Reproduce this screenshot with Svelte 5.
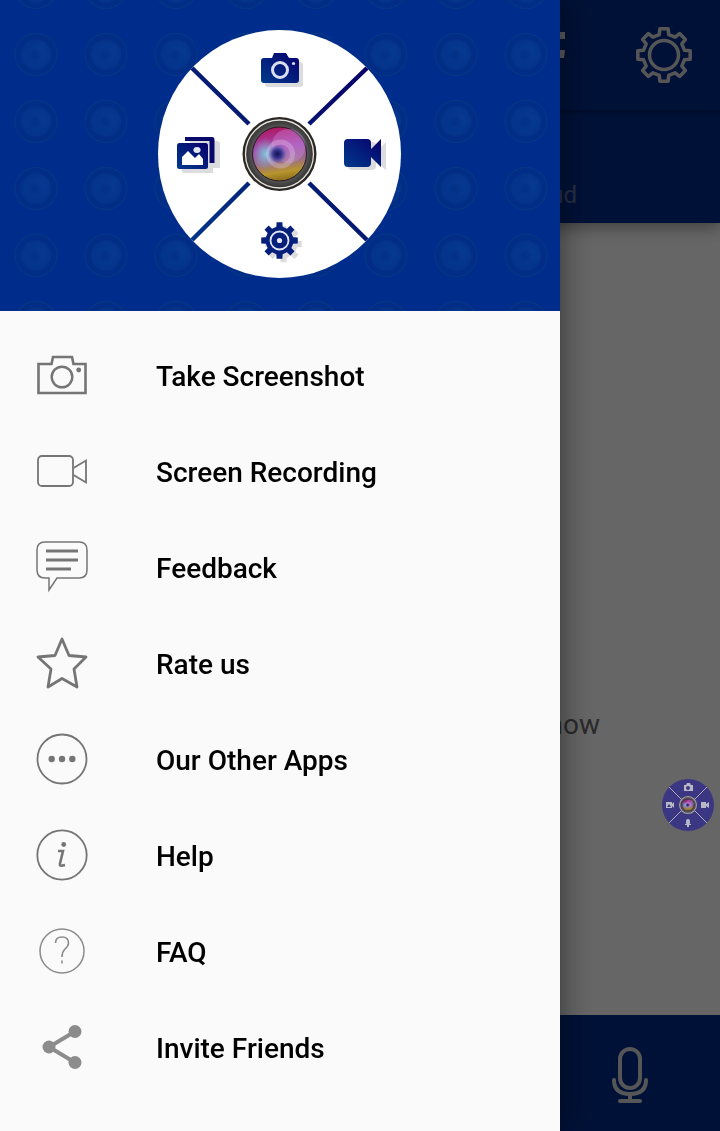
<script lang="ts">
	type Item = { id: string; label: string };

	const items: Item[] = [
		{ id: 'camera', label: 'Take Screenshot' },
		{ id: 'video', label: 'Screen Recording' },
		{ id: 'feedback', label: 'Feedback' },
		{ id: 'star', label: 'Rate us' },
		{ id: 'more', label: 'Our Other Apps' },
		{ id: 'info', label: 'Help' },
		{ id: 'question', label: 'FAQ' },
		{ id: 'share', label: 'Invite Friends' }
	];

	// Eight-tooth gear centred on 0,0. Half angles are in degrees.
	function gear(outer: number, inner: number, tip: number, root: number) {
		const points: string[] = [];
		for (let i = 0; i < 8; i++) {
			const base = i * 45;
			const corners = [
				[inner, -root],
				[outer, -tip],
				[outer, tip],
				[inner, root]
			];
			for (const [r, deg] of corners) {
				const a = ((base + deg) * Math.PI) / 180;
				points.push(`${(r * Math.cos(a)).toFixed(2)},${(r * Math.sin(a)).toFixed(2)}`);
			}
		}
		return points.join(' ');
	}
</script>

{#snippet lens()}
	<circle r="37" fill="#2a2724" />
	<circle r="34" fill="#3c3b39" stroke="#e4e4dc" stroke-width="1.3" />
	<circle r="30.5" fill="#505050" stroke="#444" stroke-width="2" />
	<circle r="27" fill="url(#glass)" stroke="#2b1a24" />
	<ellipse cx="-14" cy="0" rx="13" ry="16" fill="url(#cyan)" />
	<circle cx="9" cy="-8" r="17" fill="#d8a0f0" opacity="0.3" />
	<circle cx="1" r="12" fill="none" stroke="#ecd8f4" stroke-width="5" opacity="0.3" />
	<circle cx="-2" r="9" fill="url(#pupil)" />
{/snippet}

<div class="screen">
	<header class="appbar">
		<svg class="brand" width="18" height="30" viewBox="0 0 18 30" aria-hidden="true">
			<path d="M2 2H18V9H10V26H2ZM12 20H18L17 28H12Z" fill="#e6e6e6" />
		</svg>
		<button class="icon-button" aria-label="Settings">
			<svg width="60" height="60" viewBox="-30 -30 60 60" fill="none" stroke="#d8d8d8" stroke-width="3.5" stroke-linejoin="round">
				<polygon points={gear(26.5, 21, 9, 13)} />
				<circle r="14.5" />
			</svg>
		</button>
	</header>
	<div class="tabs">
		<button class="tab">Cloud</button>
	</div>
	<main class="content">
		<p>now</p>
	</main>
	<footer class="toolbar">
		<button class="icon-button mic" aria-label="Record audio">
			<svg width="40" height="60" viewBox="0 0 40 60" fill="none" stroke="#d8d8d8" stroke-width="4" stroke-linecap="round">
				<rect x="10" y="6" width="20" height="39" rx="10" />
				<path d="M4 37C4 47 10 51 20 51S36 47 36 37M20 51V58M10 58H30" />
			</svg>
		</button>
	</footer>
</div>

<div class="scrim"></div>

<button class="bubble" aria-label="Open quick actions">
	<svg width="52" height="52" viewBox="0 0 52 52">
		<circle cx="26" cy="26" r="26" fill="#3c3783" />
		<path d="M7 8L19 20M45 8L33 20M7 44L19 32M45 44L33 32" stroke="#aaa9c0" />
		<g fill="#b9b8c6">
			<path d="M22 6H24L25 4H28L29 6H31V12H22Z" />
			<path d="M4 23H10V25L12 23V29L10 27V29H4Z" />
			<path d="M39 23H44V25L47 23V29L44 27V29H39Z" />
			<rect x="24" y="40" width="4" height="6" rx="2" />
			<path d="M23 45H29V46H27V48H25V46H23Z" />
		</g>
		<circle cx="26" cy="9" r="2" fill="#3c3783" />
		<path d="M5 28L7 25L9 28Z" fill="#3c3783" />
		<g transform="translate(26 26) scale(0.21)" opacity="0.85">
			<circle r="43" fill="#b9b0a8" />
			{@render lens()}
		</g>
	</svg>
</button>

<aside class="drawer">
	<div class="banner">
		<svg class="wheel" width="244" height="248" viewBox="158 30 244 248" aria-hidden="true">
			<defs>
				<linearGradient id="navy" gradientUnits="userSpaceOnUse" x1="367" y1="68" x2="192" y2="240">
					<stop offset="0" stop-color="#08006a" />
					<stop offset="0.5" stop-color="#041b74" />
					<stop offset="1" stop-color="#00348a" />
				</linearGradient>
				<linearGradient id="shape" x1="1" y1="0" x2="0" y2="1">
					<stop offset="0" stop-color="#08006c" />
					<stop offset="1" stop-color="#003a8c" />
				</linearGradient>
				<linearGradient id="glass" x1="0.3" y1="0" x2="0.45" y2="1">
					<stop offset="0" stop-color="#b0145f" />
					<stop offset="0.4" stop-color="#a24bb0" />
					<stop offset="0.65" stop-color="#9a6a8a" />
					<stop offset="0.85" stop-color="#b8962c" />
					<stop offset="1" stop-color="#8d6f1d" />
				</linearGradient>
				<radialGradient id="cyan">
					<stop offset="0" stop-color="#7cc4da" />
					<stop offset="1" stop-color="#8ab4d0" stop-opacity="0" />
				</radialGradient>
				<radialGradient id="pupil">
					<stop offset="0" stop-color="#150f52" />
					<stop offset="0.5" stop-color="#3c3690" />
					<stop offset="1" stop-color="#5c62b0" stop-opacity="0.2" />
				</radialGradient>
			</defs>

			<ellipse cx="279.5" cy="154" rx="121.5" ry="124" fill="#fff" />
			<path d="M192 68L249 124M367 68L309 124M192 240L249 183M367 240L309 183" stroke="url(#navy)" stroke-width="4.5" />

			<!-- grey copies sit behind each shape -->
			<g fill="#dcdcde">
				<path d="M268 62H277L279 57H290L293 62H300Q303 62 303 65V84Q303 87 300 87H268Q265 87 265 84V65Q265 62 268 62Z" />
				<path d="M190 141H217Q220 141 220 144V168H213V173H184Q182 173 182 171V149H190Z" />
				<path d="M352 142H373Q376 142 376 146V152L386 142V170L376 162V166Q376 170 372 170H352Q348 170 348 166V146Q348 142 352 142Z" />
				<polygon points={gear(18.5, 14, 9, 13)} transform="translate(283.5 244)" />
			</g>

			<path d="M264 58H272L274 53H286L289 58H296Q299 58 299 61V80Q299 83 296 83H264Q261 83 261 80V61Q261 58 264 58Z" fill="url(#shape)" />
			<circle cx="280" cy="70" r="7.5" fill="none" stroke="#dcdff0" stroke-width="3" />
			<circle cx="293.5" cy="63.5" r="1.6" fill="#dcdff0" />

			<path d="M185 137H212Q214.5 137 214.5 140V163H209.5V141H185Z" fill="#09096c" />
			<rect x="177" y="143" width="31" height="26" rx="2.5" fill="url(#shape)" />
			<path d="M182 165V157L188 151L195 158L199 154L203 159V165Z" fill="#fff" />
			<ellipse cx="197" cy="150" rx="3.6" ry="3" fill="#e2e5f4" />

			<path d="M348 139H367Q371 139 371 143V149L381 139V167L371 157V163Q371 167 367 167H348Q344 167 344 163V143Q344 139 348 139Z" fill="url(#shape)" />

			<g transform="translate(279.5 240.5)">
				<polygon points={gear(18.5, 14, 9, 13)} fill="#05207a" />
				<circle r="9" fill="none" stroke="#e4e7f4" stroke-width="1.8" />
				<circle r="2.6" fill="#e4e7f4" />
			</g>

			<g transform="translate(279.5 154)">{@render lens()}</g>
		</svg>
	</div>

	<nav class="menu">
		{#each items as item (item.id)}
			<button class="menu-item">
				<svg class="icon {item.id}" width="56" height="56" viewBox="0 0 56 56" aria-hidden="true">
					{#if item.id === 'camera'}
						<path d="M4.5 17H17.5L19 10H38L39.5 17H51.5V46H4.5Z" stroke-width="2.6" />
						<circle cx="28" cy="30" r="10.3" stroke-width="2.4" />
						<circle class="solid" cx="44.7" cy="23" r="2.4" />
					{:else if item.id === 'video'}
						<rect x="4" y="13" width="35" height="30" rx="4" stroke-width="1.8" />
						<path d="M39.5 25L52 17.5V39.5L39.5 32" stroke-width="1.8" />
					{:else if item.id === 'feedback'}
						<path d="M11 3H45Q53 3 53 11V31Q53 39 45 39H23L15 51V39H11Q3 39 3 31V11Q3 3 11 3Z" stroke-width="1.5" />
						<path d="M12 12H44M12 21H44M12 30H37" stroke-width="3" />
					{:else if item.id === 'star'}
						<path d="M28 4L35 20.5L52 22L40 34L43 52L28 43.5L14 52L17 34L4 22L21 20.5Z" stroke-width="2.8" stroke-linejoin="round" />
					{:else if item.id === 'more'}
						<circle cx="28" cy="28" r="24.5" stroke-width="1.8" />
						<g class="solid">
							<circle cx="17.7" cy="28" r="3.2" />
							<circle cx="28" cy="28" r="3.2" />
							<circle cx="38.3" cy="28" r="3.2" />
						</g>
					{:else if item.id === 'info'}
						<circle cx="28" cy="28" r="24.7" stroke-width="1.8" />
						<circle class="solid" cx="29.7" cy="17.5" r="2.4" />
						<path d="M24 24H29L26 36.5Q25.4 39 27.5 38.8L31 38" stroke-width="2.6" />
					{:else if item.id === 'question'}
						<circle cx="28" cy="28" r="22" stroke-width="1.5" />
						<path d="M21.5 20Q21.5 14 28 14Q34.5 14 34.5 20Q34.5 23 31 26Q28 29 28 34M28 37.5V40.5" stroke-width="1.6" />
					{:else}
						<path d="M41 12.5L15 28L41 43.5" stroke-width="4" />
						<g class="solid">
							<circle cx="41" cy="12.5" r="6.5" />
							<circle cx="15" cy="28" r="6.5" />
							<circle cx="41" cy="43.5" r="6.5" />
						</g>
					{/if}
				</svg>
				<span class="label">{item.label}</span>
			</button>
		{/each}
	</nav>
</aside>

<style>
	:global(body) {
		margin: 0;
		font-family: Roboto, 'Liberation Sans', sans-serif;
		background: #fff;
	}

	button {
		padding: 0;
		border: 0;
		background: none;
		font: inherit;
		color: inherit;
		cursor: pointer;
	}

	svg {
		display: block;
	}

	.screen {
		display: flex;
		flex-direction: column;
		min-height: 100vh;
		isolation: isolate;
	}

	.appbar {
		display: flex;
		align-items: center;
		justify-content: space-between;
		padding: 25px 26px;
		background: #002c8b;
		box-shadow: 0 2px 4px rgba(0, 0, 0, 0.3);
		z-index: 1;
	}

	.brand {
		margin: 0 0 20px auto;
	}

	.appbar .icon-button {
		margin-left: 69px;
	}

	.tabs {
		display: flex;
		justify-content: flex-end;
		padding: 71px 143px 14px 0;
		background: #002c8b;
		box-shadow: 0 4px 16px rgba(0, 0, 0, 0.4);
	}

	.tab {
		font-size: 24px;
		line-height: 28px;
		color: #6379aa;
	}

	.content {
		display: flex;
		flex: 1;
		align-items: center;
		justify-content: flex-end;
		padding: 212px 120px 0 0;
	}

	.content p {
		margin: 0;
		font-size: 28px;
		line-height: 32px;
		color: #6a6a6a;
	}

	.toolbar {
		display: grid;
		grid-template-columns: repeat(4, 1fr);
		padding: 28px 0;
		background: #002c8b;
	}

	.mic {
		grid-column: 4;
		justify-self: center;
	}

	.scrim {
		position: fixed;
		inset: 0;
		background: rgba(0, 0, 0, 0.6);
	}

	.bubble {
		position: fixed;
		right: 6px;
		bottom: 300px;
	}

	.drawer {
		position: fixed;
		top: 0;
		bottom: 0;
		left: 0;
		width: calc(100% - 160px);
		overflow: hidden auto;
		background: #fafafa;
		box-shadow: 0 0 32px rgba(0, 0, 0, 0.5);
	}

	.banner {
		display: flex;
		justify-content: center;
		padding: 30px 0 33px;
		background-color: #002c8b;
		background-image:
			radial-gradient(circle at 40px 31px, rgba(20, 75, 160, 0.2), transparent 12px),
			radial-gradient(
				circle,
				#022f86 3px,
				#04358e 7px,
				#04348a 14px,
				#012d86 16px,
				#012d86 20px,
				#053784 21px,
				transparent 22px
			);
		background-size: 70px 67px;
		background-position: 1px 21px;
	}

	.menu {
		display: flex;
		flex-direction: column;
		padding: 16px 0;
	}

	.menu-item {
		display: flex;
		align-items: center;
		gap: 66px;
		height: 96px;
		padding: 0 34px;
		text-align: left;
		font-size: 28px;
		font-weight: 500;
		line-height: 32px;
		color: #000;
	}

	.label {
		padding-top: 4px;
	}

	.icon {
		flex: none;
		fill: none;
		stroke: #757575;
	}

	.icon .solid {
		fill: #757575;
		stroke: none;
	}

	.icon.question,
	.icon.share {
		stroke: #8c8c8c;
	}

	.icon.share .solid {
		fill: #8c8c8c;
	}
</style>
